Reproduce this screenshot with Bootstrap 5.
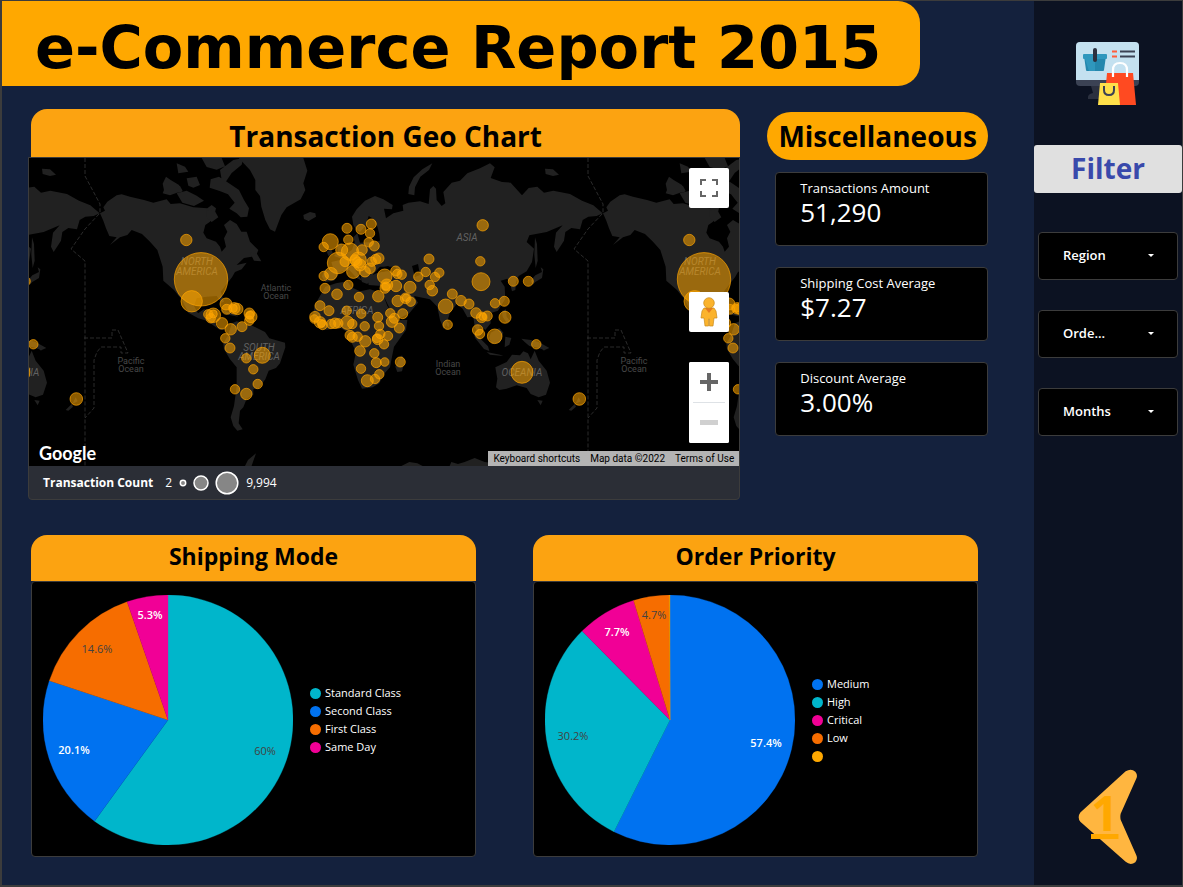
<!DOCTYPE html>
<html lang="en">
<head>
<meta charset="utf-8">
<meta name="viewport" content="width=device-width, initial-scale=1">
<title>e-Commerce Report 2015</title>
<link href="https://cdn.jsdelivr.net/npm/bootstrap@5.3.0/dist/css/bootstrap.min.css" rel="stylesheet">
<style>
body{background:#14213d;color:#fff;font-family:"Open Sans","Noto Sans",sans-serif}
.report{min-height:100vh;border:1px solid #3c3c3c;border-width:1px 1px 2px 2px}
.report-title{width:89%;height:85px;background:#ffa800;color:#000;border-radius:0 22px 22px 0;padding:8px 0 0 33px}
.report-title h1{font:bold 59px/1 "DejaVu Sans",sans-serif;white-space:nowrap}
.map-row{padding:23px 46px 0 26px;gap:27px}
.map-col{flex:713 1 0;min-width:0}
.misc-col{flex:221 1 0;min-width:0;padding-top:3px}
.panel-title{background:#fca311;color:#000;font-weight:700;text-align:center;border-radius:16px 16px 0 0;margin:0}
.map-title{font-size:28px;line-height:54px;height:48px;margin-left:3px}
.map-card{background:#2b2e36;border:1px solid #3c3c3c;border-radius:0 0 4px 4px;overflow:hidden}
.map-area svg.world{display:block;width:100%;height:308px;background:#000}
.map-key{height:33px;padding-left:14px;font-size:12px}
.map-key svg{margin:0 7px}
.map-btn{width:40px;height:40px;background:#fff;border:0;border-radius:2px;padding:0;display:grid;place-items:center}
.street{margin-top:84px}
.map-tools{top:10px;right:10px}
.zoomer{background:#fff;border-radius:2px;margin-top:30px}
.attrib{right:0;bottom:0;background:#b4b4b4;font:10px/15px Roboto,sans-serif;padding:0 5px;gap:10px}
.attrib a,.attrib span{color:#000;text-decoration:none}
.g-logo{left:10px;bottom:3px;font:700 18px/20px Lato,sans-serif;color:#fff}
.misc-title{background:#ffa800;color:#000;font-weight:700;font-size:28px;line-height:48px;border-radius:24px;text-align:center;margin:0 0 12px}
.score{background:#000;border:1px solid #3c3c3c;border-radius:4px;height:74px;padding:6px 0 0 24px;margin:0 0 21px 8px}
.score-name{font-size:13px;line-height:19px;font-weight:500}
.score-value{font-size:26px;line-height:28px}
.pie-row{padding:35px 56px 28px 29px;gap:57px}
.pie-col{flex:1 1 0;min-width:0}
.pie-title{font-size:23px;line-height:42px;height:46px}
.pie-card{background:#000;border:1px solid #3c3c3c;border-radius:4px;padding:13px 10px 11px 11px;gap:17px}
.pie-card svg{width:250px;height:250px;flex:none}
.key-list{font-size:11px;font-weight:500;line-height:18px;margin:0;padding:0;list-style:none}
.key-list li{display:flex;align-items:center;gap:4px;height:18px}
.key-list i{width:11px;height:11px;border-radius:50%}
.side{flex:0 0 148px;background:#0c1222;padding-top:41px}
.side-title{background:#e0e0e0;color:#3949ab;font-weight:700;font-size:28px;line-height:46px;height:48px;text-align:center;border-radius:3px;margin:39px 0}
.side .form-select{height:48px;background-color:#000;color:#fff;border:1px solid #3c3c3c;border-radius:4px;font-size:13px;font-weight:600;padding:0 36px 0 24px;background-size:8px 4px;background-position:right 22px center;background-image:url("data:image/svg+xml,%3Csvg xmlns='http://www.w3.org/2000/svg' viewBox='0 0 8 4'%3E%3Cpath d='M1 0h6L4 3z' fill='%23fff'/%3E%3C/svg%3E")}
.filters{gap:30px;padding:0 4px}
.page-link-back{width:60px;height:97px;margin:auto 44px 20px auto}
.page-link-back span{left:13px;top:12px;font-weight:700;font-size:48px;line-height:66px;color:#ffa800;text-decoration:underline;text-decoration-thickness:5px;text-underline-offset:3px}
</style>
</head>
<body>
<div class="report d-flex">
<main class="flex-grow-1">
  <header class="report-title d-flex align-items-center"><h1 class="m-0">e-Commerce Report 2015</h1></header>

  <div class="map-row d-flex">
    <section class="map-col">
      <h2 class="panel-title map-title">Transaction Geo Chart</h2>
      <div class="map-card">
        <div class="map-area position-relative">
          <svg class="world" viewBox="29 158 711 308" preserveAspectRatio="xMinYMid slice" role="img" aria-label="World map of transactions">
            <defs>
              <g id="land" fill="#212121">
                <g transform="translate(20 150) scale(.33333)">
                  <path d="M240 190L255 182 250 172 262 155 290 136 305 133 330 140 372 150 400 158 440 148 452 162 480 160 520 172 562 175 575 165 588 175 583 195 570 215 556 225 550 248 560 265 588 275 600 290 605 305 618 290 612 265 622 245 612 225 630 210 650 222 664 245 680 245 690 275 715 300 708 318 672 324 650 345 680 338 665 358 645 366 636 382 620 402 602 425 612 455 604 458 590 438 560 440 530 445 522 468 534 490 552 478 564 480 556 500 582 508 590 530 620 540 600 540 560 512 535 505 505 488 486 450 462 420 430 392 428 350 412 300 390 275 366 252 335 240 322 255 300 262 270 285 290 262 268 258 258 235 250 212z"/>
                  <path d="M438 80l14 10 25 15 10 20-20 4-35-8-4-20zM500 85l30-5 10 25-20 8-15-6zM470 40l25 10 10 15-30 5zM470 130l30-8 30 15 22 15-30 16-35-10zM545 24l60 0 10 25-25 10-30-8zM600 60l40-30 30-6-5 20-30 25-20 30-10-10zM572 88l25-8 30 20 30 20 15 30 15 25-5 25-20 2-12-12-22-14 16-18-20-25-25-10-30-10zM440 100l15 12 25-4 8 14-38 14-22-6zM560 180l25 4 10 18-20 14-14-12zM690 308l20 2 14 24-22-2zM600 480l35 8 20 12-30-6z" />
                  <path d="M656 24L850 24 862 62 850 100 856 120 842 148 800 172 784 195 765 245 750 238 736 210 724 170 720 138 706 120 706 90 690 60z"/>
                </g>
                <g transform="translate(260 150) scale(.33333)">
                  <path d="M130 195l20-9 16 4 2 10-22 13-14-6zM445 132l2-22 14-28 26-24 30-18-10 20-26 20-16 32-2 24zM222 318l12-14-4-22 14-2 6 24 10 14-14 8zM200 305l14-8 4 12-12 10zM855 56l24 2 18 16-18 4-22-6zM825 262l6 20 2 50-6 22-4-40zM812 392l14-16 20-10-4-14 8 6-4 26-20 12-8 8z"/>
                  <path d="M280 225L276 200 290 178 315 152 345 138 370 148 398 165 396 178 372 176 378 205 400 190 430 182 428 165 445 158 480 154 506 162 510 118 520 108 528 116 530 150 545 168 556 160 550 126 575 98 600 92 622 70 660 55 690 40 704 52 692 84 726 96 752 98 786 136 806 114 832 110 852 128 880 122 930 132 966 152 1000 166 1028 190 1010 198 985 200 968 210 960 238 934 234 916 246 912 272 890 306 882 290 888 248 908 226 860 246 808 256 800 276 822 296 816 336 800 364 776 378 768 396 766 420 756 424 750 400 742 386 722 392 734 410 736 446 714 482 690 490 692 520 676 540 660 525 655 550 644 530 640 500 622 502 608 476 590 462 570 488 560 520 552 538 540 510 532 470 510 448 462 438 474 458 448 490 408 510 396 490 372 440 366 408 326 405 322 382 350 370 380 362 420 378 405 350 360 350 340 372 322 402 306 396 300 370 284 356 306 392 290 384 268 360 240 366 222 392 196 396 186 380 192 360 222 362 214 336 240 330 252 314 276 300 284 276 280 262 292 250 300 278 340 276 360 272 358 252 352 230 336 204 326 198 318 226 300 246 288 238z"/>
                  <path d="M196 410L228 400 262 394 274 412 300 424 330 418 368 430 382 468 410 510 442 510 438 540 402 590 396 620 390 652 372 672 358 700 338 712 306 716 294 690 280 644 288 606 266 560 262 546 238 532 200 540 176 528 158 500 164 466zM416 628l10-12 8 16-8 32-14 2-6-16z"/>
                  <path d="M560 512l8 10-2 10-6-6zM638 545l16 14 30 30 4 14-16-6-26-32zM692 548l26-14 12 14-10 30-24 4-8-18zM680 606l40 8 10 4-40-4zM736 560l18 4-6 20-14 8zM726 484l12-6 2 22 10 14-10 4-12-18zM784 566l28 4 24 6 32 18-14 6-26-8-20-4-14-12z"/>
                </g>
                <path transform="translate(20 320) scale(.33333)" d="M636 10L650 4 690 14 735 36 748 55 795 68 796 82 780 130 768 144 746 152 736 178 716 204 700 208 700 224 680 236 670 262 660 272 656 310 668 328 652 332 640 318 632 292 642 258 650 200 650 142 630 118 612 88 610 70 622 50zM674 440l10-20 24-20-14 40z"/>
                <path transform="translate(500 320) scale(.33333)" d="M-14 142L20 126 36 104 60 106 70 94 84 100 92 118 104 92 116 122 140 152 150 188 138 224 116 232 92 222 80 204 50 196 20 206-2 210-12 202-8 176zM112 240l16 2-6 14zM236 232l6 12-16 8zM224 252l4 8-14 12-8-2zM120 80l16 8-4 4z"/>
                <path transform="translate(260 320) scale(.33333)" d="M420 440l28-14 24 4 20 10zM568 440l6-14 20 6 20-6 30-12 30 12 30 4 40 0v10z"/>
                <g fill="#000"><path d="M412 266l6-2 2 11-5 2z"/><path d="M380 268l8-2 6 4-12 2z"/></g>
                <g fill="none" stroke="#3e3e3e" stroke-width=".7" stroke-dasharray="4 2">
                  <path d="M85 158V176L100 204V213L85 229 71 249 85 261V466" />
                  <path d="M84 338H112V330H118L128 353H121V347H101L97 352 94 360V408L85 418"/>
                </g>
              </g>
              <g id="places" fill="#626262" font-family="Roboto, sans-serif" font-size="10" text-anchor="middle">
                <g font-style="italic"><text x="197" y="265">NORTH</text><text x="197" y="275">AMERICA</text><text x="259" y="351">SOUTH</text><text x="259" y="360">AMERICA</text><text x="357" y="314">AFRICA</text><text x="467" y="241">ASIA</text><text x="522" y="376">OCEANIA</text></g>
                <g fill="#484848" font-size="9"><text x="131" y="364">Pacific</text><text x="131" y="372">Ocean</text><text x="276" y="291">Atlantic</text><text x="276" y="299">Ocean</text><text x="448" y="367">Indian</text><text x="448" y="375">Ocean</text></g>
              </g>
              <g id="bubbles" fill="#ffa500" fill-opacity=".55" stroke="#ffa500" stroke-width=".8" stroke-opacity=".85"></g>
            </defs>
            <use href="#land" x="-503"/><use href="#land"/><use href="#land" x="503"/>
            <use href="#places" x="-503"/><use href="#places"/><use href="#places" x="503"/>
            <use href="#bubbles" x="-503"/><use href="#bubbles"/><use href="#bubbles" x="503"/>
          </svg>
          <div class="map-tools position-absolute">
            <button class="map-btn" type="button" aria-label="Full screen"><svg width="18" height="18" fill="none" stroke="#666" stroke-width="2"><path d="M1 6V1H6M12 1H17V6M17 12V17H12M6 17H1V12"/></svg></button>
            <button class="map-btn street" type="button" aria-label="Street view"><svg width="18" height="30" viewBox="0 0 18 30" fill="#fbb32c" stroke="#c98a1b" stroke-width=".7"><path d="M4 11H14L16 14 17 21H14L13 29H9.500V22H8.500V29H5L4 21H1L2 14z"/><path d="M5 11H13L9 16z" fill="#e57a1f" stroke="none"/><circle cx="9" cy="6" r="5.300"/></svg></button>
            <div class="zoomer">
              <button class="map-btn" type="button" aria-label="Zoom in"><svg width="18" height="18"><path d="M7 0h4v7h7v4h-7v7H7v-7H0V7h7z" fill="#666"/></svg></button>
              <div class="mx-1 border-top"></div>
              <button class="map-btn" type="button" aria-label="Zoom out"><svg width="18" height="18"><path d="M0 6h18v5H0z" fill="#d0d0d0"/></svg></button>
            </div>
          </div>
          <div class="g-logo position-absolute">Google</div>
          <div class="attrib position-absolute d-flex"><a href="#">Keyboard shortcuts</a><span>Map data ©2022</span><a href="#">Terms of Use</a></div>
        </div>
        <div class="map-key d-flex align-items-center">
          <strong class="me-2 pe-1">Transaction Count</strong><span>2</span>
          <svg width="60" height="24" fill="#868686" stroke="#fff" stroke-width="1.500"><circle cx="4" cy="12" r="2.700"/><circle cx="22" cy="12" r="7"/><circle cx="48" cy="12" r="10.800"/></svg>
          <span>9,994</span>
        </div>
      </div>
    </section>

    <section class="misc-col">
      <h2 class="misc-title">Miscellaneous</h2>
      <div class="score"><div class="score-name">Transactions Amount</div><div class="score-value">51,290</div></div>
      <div class="score"><div class="score-name">Shipping Cost Average</div><div class="score-value">$7.27</div></div>
      <div class="score"><div class="score-name">Discount Average</div><div class="score-value">3.00%</div></div>
    </section>
  </div>

  <div class="pie-row d-flex">
    <section class="pie-col">
      <h2 class="panel-title pie-title">Shipping Mode</h2>
      <div class="pie-card d-flex align-items-center">
        <svg id="shipping" viewBox="0 0 250 250" role="img" aria-label="Shipping mode shares"></svg>
        <ul class="key-list"><li><i style="background:#00b6cb"></i>Standard Class</li><li><i style="background:#0072f0"></i>Second Class</li><li><i style="background:#f66d00"></i>First Class</li><li><i style="background:#f10096"></i>Same Day</li></ul>
      </div>
    </section>
    <section class="pie-col">
      <h2 class="panel-title pie-title">Order Priority</h2>
      <div class="pie-card d-flex align-items-center">
        <svg id="priority" viewBox="0 0 250 250" role="img" aria-label="Order priority shares"></svg>
        <ul class="key-list"><li><i style="background:#0072f0"></i>Medium</li><li><i style="background:#00b6cb"></i>High</li><li><i style="background:#f10096"></i>Critical</li><li><i style="background:#f66d00"></i>Low</li><li><i style="background:#ffa800"></i></li></ul>
      </div>
    </section>
  </div>
</main>

<aside class="side d-flex flex-column">
  <svg class="mx-auto d-block" width="64" height="64" viewBox="0 0 64 64" aria-hidden="true">
    <path d="M15 44h14v13H12q-1-5 5-6z" fill="#2b303f"/>
    <rect width="63" height="44" rx="4" fill="#3b4254"/><path d="M0 38V4Q0 0 4 0H59Q63 0 63 4V38z" fill="#c4e1f0"/>
    <path d="M8 14H30L28 28Q28 29 27 29H11Q10 29 10 28z" fill="#2487ad"/><path d="M8 14H19V29H13z" fill="#2f97bd"/><rect x="7" y="12" width="24" height="5" rx="1" fill="#2f97bd"/>
    <rect x="17" y="6" width="4" height="14" rx="2" fill="#2b303f"/>
    <path d="M36 9.500h5M36 14.500h5" stroke="#ff5d3b" stroke-width="2"/><path d="M44 9.500h15M44 14.500h15" stroke="#3b4254" stroke-width="2"/>
    <path d="M31 31H57L60 63H28z" fill="#ff4a21"/><path d="M37 35V28Q37 21 44 21T51 28V35" fill="none" stroke="#fff" stroke-width="2.200"/>
    <path d="M24 41H42L44 63H22z" fill="#ffe04a"/><path d="M28 44V48Q28 53 33 53T38 48V44" fill="none" stroke="#3b4254" stroke-width="2"/>
  </svg>
  <h2 class="side-title">Filter</h2>
  <div class="filters d-flex flex-column">
    <select class="form-select" aria-label="Region"><option>Region</option></select>
    <select class="form-select" aria-label="Order priority"><option>Orde...</option></select>
    <select class="form-select" aria-label="Months"><option>Months</option></select>
  </div>
  <a href="#" class="page-link-back position-relative d-block" aria-label="Page 1">
    <svg class="d-block" width="60" height="97" viewBox="175 85 180 290"><path fill="#ffb640" d="M182 218L318 94Q335 84 347 96 355 106 350 116L303 222Q301 231 303 240L350 346Q355 358 347 367 333 378 318 366L182 246Q172 232 182 218z"/></svg>
    <span class="position-absolute">1</span>
  </a>
</aside>
</div>

<script src="https://cdn.jsdelivr.net/npm/bootstrap@5.3.0/dist/js/bootstrap.bundle.min.js"></script>
<script>
const NS = 'http://www.w3.org/2000/svg';
function add(parent, tag, attrs, text) {
  const el = document.createElementNS(NS, tag);
  for (const k in attrs) el.setAttribute(k, attrs[k]);
  if (text) el.textContent = text;
  parent.appendChild(el);
}

// Bubbles grouped by map tile: tile origin, then x, y, radius in thirds of a map unit.
const tiles = [
  [20, 150, [[499,270,17],[543,388,80],[515,454,32],[565,493,14],[580,496,22],[572,505,14],[580,492,12],[606,520,17],[618,462,18],[620,478,15],[643,475,17],[640,475,12],[652,477,17],[688,490,16],[693,500,18],[690,496,12],[688,512,14]]],
  [20, 320, [[632,28,17],[666,20,15],[616,55,14],[630,84,15],[679,115,14],[727,106,24],[700,148,14],[713,192,14],[645,208,14],[679,222,17]]],
  [260, 150, [[261,235,15],[303,238,15],[334,222,15],[330,250,14],[265,269,14],[326,277,14],[343,288,15],[211,275,24],[191,291,14],[245,300,18],[270,305,26],[306,300,16],[234,339,32],[213,371,19],[191,378,14],[295,330,24],[280,365,20],[300,345,18],[315,365,16],[330,355,16],[335,335,14],[347,328,15],[356,325,16],[285,330,16],[255,335,15],[292,335,14],[374,379,22],[407,363,15],[412,372,14],[425,374,14],[380,405,18],[375,415,15],[378,408,12],[408,408,17],[450,412,18],[195,415,15],[231,433,16],[265,405,14],[297,441,14],[355,439,17],[507,327,15],[497,366,14],[475,380,14],[538,368,14],[525,381,14],[509,405,14],[517,422,16],[413,453,17],[437,445,16],[438,443,11],[452,455,14],[557,469,22],[577,432,15],[603,452,16],[627,462,15],[648,489,16],[665,502,16],[668,500,11],[682,498,15],[705,460,14],[733,454,15],[735,502,18],[563,524,14],[668,226,17],[661,334,14],[663,395,27],[760,394,15],[805,394,15],[180,467,15],[207,482,15],[260,482,14],[304,491,14],[353,502,15],[391,490,14],[428,491,15],[403,505,15],[396,515,17],[165,500,16],[163,507,13],[180,517,17],[188,525,14],[184,520,12],[213,522,14],[225,520,16],[235,520,14],[262,518,20],[277,522,14],[314,529,14],[357,528,14],[418,534,15]]],
  [260, 320, [[270,46,15],[277,52,15],[293,50,14],[316,64,17],[361,42,14],[353,58,16],[350,55,13],[384,48,14],[372,73,14],[300,93,16],[343,100,14],[349,128,15],[374,126,13],[421,126,15],[303,146,14],[322,182,18],[345,177,14],[358,163,14],[653,30,16],[660,42,14],[704,49,22]]],
  [500, 320, [[66,157,33],[109,73,14],[238,237,19]]]
];
const bubbles = document.getElementById('bubbles');
for (const [ox, oy, list] of tiles)
  for (const [x, y, r] of list)
    add(bubbles, 'circle', {cx: (ox + x / 3).toFixed(1), cy: (oy + y / 3).toFixed(1), r: (r / 3).toFixed(1)});

// Each slice: share, fill, label, label centre, label colour.
function pie(id, slices) {
  const svg = document.getElementById(id);
  let a = 0;
  const pt = t => (125 + 125 * Math.sin(t * 2 * Math.PI)).toFixed(2) + ' ' + (125 - 125 * Math.cos(t * 2 * Math.PI)).toFixed(2);
  for (const [share, fill] of slices) {
    const b = a + share / 100;
    add(svg, 'path', {fill, stroke: fill, 'stroke-width': .3, d: `M125 125L${pt(a)}A125 125 0 ${share > 50 ? 1 : 0} 1 ${pt(b)}z`});
    a = b;
  }
  for (const [, , label, x, y, dark] of slices)
    if (label) add(svg, 'text', {x, y: y + 4, 'font-size': 11, 'text-anchor': 'middle', fill: dark ? '#424242' : '#fff', 'font-weight': dark ? 400 : 600}, label);
}
pie('shipping', [[60,'#00b6cb','60%',222,156,1],[20.1,'#0072f0','20.1%',31,155,0],[14.6,'#f66d00','14.6%',54,54,1],[5.3,'#f10096','5.3%',107,20,0]]);
pie('priority', [[57.4,'#0072f0','57.4%',221,148,0],[30.2,'#00b6cb','30.2%',28,141,1],[7.7,'#f10096','7.7%',72,37,0],[4.6,'#f66d00','4.7%',109,20,1],[.1,'#ffa800']]);
</script>
</body>
</html>
